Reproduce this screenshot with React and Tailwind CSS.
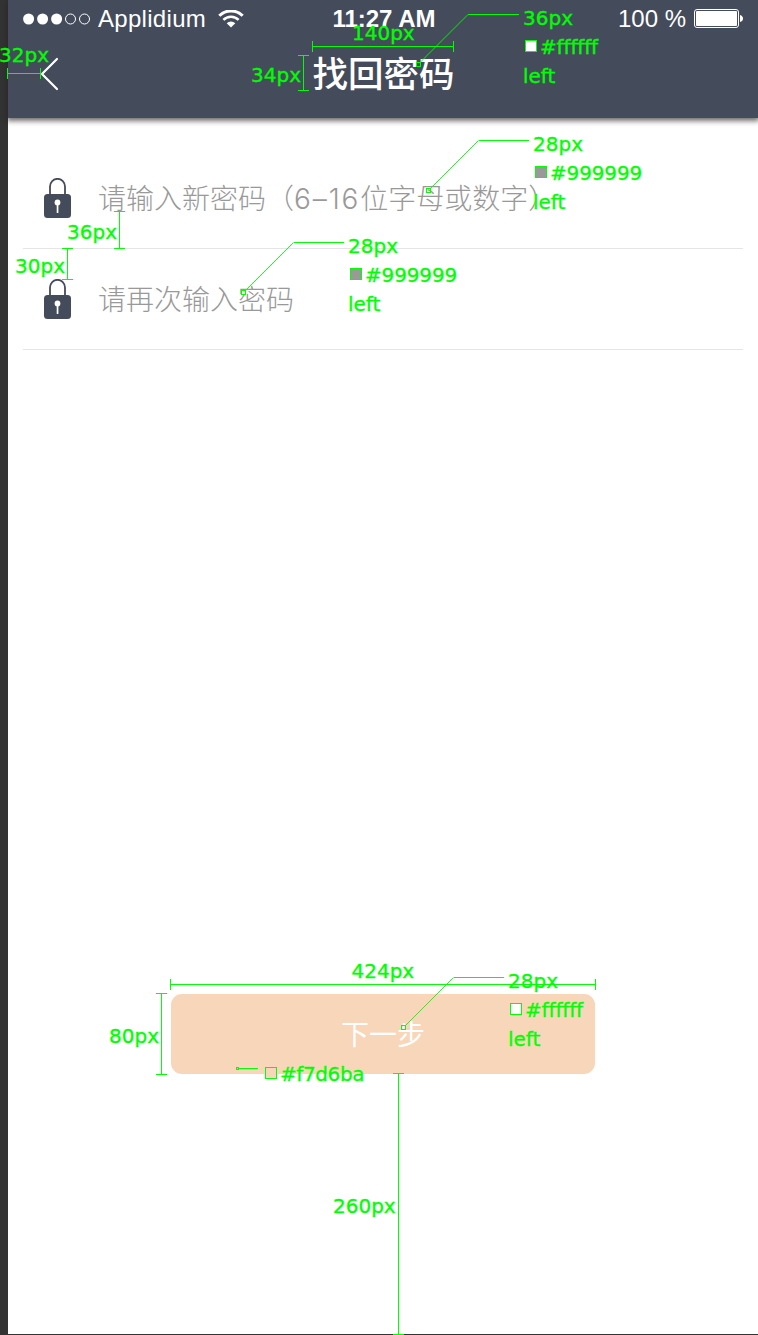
import React from 'react';

function SignalDots() {
  return (
    <svg className="block h-[12px] w-[69px]" viewBox="0 0 69 12">
      <g fill="#fff">
        <circle cx="5.6" cy="6" r="5.5" />
        <circle cx="19.6" cy="6" r="5.5" />
        <circle cx="33.6" cy="6" r="5.5" />
      </g>
      <g fill="none" stroke="#fff" strokeWidth="1">
        <circle cx="47.5" cy="6" r="5" />
        <circle cx="61.5" cy="6" r="5" />
      </g>
    </svg>
  );
}

function WifiIcon() {
  return (
    <svg className="block h-[18px] w-[26px]" viewBox="0 0 26 18" fill="none" stroke="#fff">
      <path d="M1.3 5.8 A16.5 16.5 0 0 1 24.7 5.8" strokeWidth="3" />
      <path d="M5.4 9.9 A10.8 10.8 0 0 1 20.6 9.9" strokeWidth="2.6" />
      <path d="M13 17.6 L8.7 13.3 A6.1 6.1 0 0 1 17.3 13.3 Z" fill="#fff" stroke="none" />
    </svg>
  );
}

function BatteryIcon() {
  return (
    <svg className="block h-[19px] w-[50px]" viewBox="0 0 50 19">
      <rect x="0.5" y="0.5" width="44" height="18" rx="2.5" fill="none" stroke="#fff" />
      <rect x="2" y="2" width="41" height="15" rx="1" fill="#fff" />
      <path d="M46 6 Q49 7 49 9.5 Q49 12 46 13 Z" fill="#fff" />
    </svg>
  );
}

function LockIcon() {
  return (
    <svg className="block h-[40px] w-[27px] shrink-0" viewBox="0 0 27 40">
      <path d="M6 17 V8.5 A7.5 7.7 0 0 1 21 8.5 V17" fill="none" stroke="#444b5b" strokeWidth="1.8" />
      <rect x="0" y="16" width="27" height="24" rx="3.5" fill="#444b5b" />
      <circle cx="13.5" cy="24.5" r="2.9" fill="#fff" />
      <rect x="12.7" y="25" width="1.7" height="10" rx="0.6" fill="#fff" />
    </svg>
  );
}

function Field({ children }) {
  return (
    <div className="ml-[15px] mr-[15px] flex h-[101px] items-start border-b border-[#e5e5e5] pl-[21px] pt-[30px]">
      <LockIcon />
      <div className="ml-[27px] whitespace-nowrap text-[28px] font-light leading-[38px] text-[#999999]">
        {children}
      </div>
    </div>
  );
}

function Spec({ className, swatch, size, color }) {
  return (
    <div className={'absolute whitespace-pre ' + className}>
      <div>{size}</div>
      <div className="flex items-start gap-[3px]">
        <span className={'ml-[2px] mt-[7px] block size-[12px] border border-[#00ff00] ' + swatch} />
        <span className="tracking-[-0.15px]">{color}</span>
      </div>
      <div>left</div>
    </div>
  );
}

function Annotations() {
  return (
    <div className="pointer-events-none absolute inset-0 overflow-hidden font-['DejaVu_Sans'] text-[20px] leading-[29px] text-[#00ff00] [-webkit-text-stroke:0.35px_#00ff00]">
      <svg className="absolute left-0 top-0 h-[1335px] w-[758px]" viewBox="0 0 758 1335" fill="none" stroke="#00ff00" strokeWidth="1">
        <g shapeRendering="crispEdges">
          <path d="M7.5 68V79M7 73.5H41M40.5 68V79" />
          <path d="M312.5 41V52M312 46.5H454M453.5 41V52" />
          <path d="M298 55.5H309M303.5 55V91M298 90.5H309" />
          <path d="M114 211.5H125M119.5 211V249M114 248.5H125" />
          <path d="M62 248.5H73M67.5 248V280M62 279.5H73" />
          <path d="M170.5 979V990M170 984.5H596M595.5 979V990" />
          <path d="M156 993.5H167M161.5 993V1075M156 1074.5H167" />
          <path d="M393 1073.5H404M398.5 1073V1335M393 1334.5H404" />
          <path d="M468 14.5H519M479 140.5H529M294 242.5H344M454 977.5H504M239 1068.5H258" />
          <path d="M416.5 62.5H420.5V66.5H416.5ZM426.5 188.5H430.5V192.5H426.5ZM241.5 290.5H245.5V294.5H241.5ZM401.5 1025.5H405.5V1029.5H401.5ZM236.5 1067.5H238.5V1069.5H236.5Z" />
        </g>
        <path d="M420 62.5L468 14.5M430.5 188.5L478.5 140.5M245.5 290.5L293.5 242.5M405.5 1025.5L453.5 977.5" strokeWidth="0.9" />
      </svg>
      <Spec className="left-[523px] top-[4px]" swatch="bg-white" size="36px" color="#ffffff" />
      <Spec className="left-[533px] top-[130px]" swatch="bg-[#999999]" size="28px" color="#999999" />
      <Spec className="left-[348px] top-[232px]" swatch="bg-[#999999]" size="28px" color="#999999" />
      <Spec className="left-[508px] top-[967px]" swatch="bg-white" size="28px" color="#ffffff" />
      <span className="absolute left-[-1px] top-[41px]">32px</span>
      <span className="absolute left-[352px] top-[19px]">140px</span>
      <span className="absolute left-[251px] top-[61px]">34px</span>
      <span className="absolute left-[67px] top-[218px]">36px</span>
      <span className="absolute left-[15px] top-[252px]">30px</span>
      <span className="absolute left-[351.5px] top-[957px]">424px</span>
      <span className="absolute left-[109px] top-[1022px]">80px</span>
      <span className="absolute left-[265px] top-[1067px] block size-[12px] border border-[#00ff00] bg-[#f7d6ba]" />
      <span className="absolute left-[280px] top-[1060px] tracking-[-0.4px]">#f7d6ba</span>
      <span className="absolute left-[333px] top-[1192px]">260px</span>
    </div>
  );
}

export default function App() {
  return (
    <div className="relative h-[1335px] w-[758px] overflow-hidden bg-[#333333] pb-px pl-[8px] font-['Noto_Sans_CJK_SC',sans-serif]">
      <main className="flex h-full flex-col bg-white">
        <header className="h-[118px] shrink-0 bg-[#444b5b] text-white shadow-[0_2px_5px_1px_rgba(40,30,30,0.65)]">
          <div className="grid h-[37px] grid-cols-[1fr_auto_1fr] items-center pl-[15px] pr-[14px] font-['Liberation_Sans'] text-[24px] leading-[37px]">
            <div className="flex items-center">
              <SignalDots />
              <span className="ml-[6px] tracking-[0.3px]">Applidium</span>
              <span className="ml-[12px]"><WifiIcon /></span>
            </div>
            <span className="pl-px font-bold">11:27 AM</span>
            <div className="flex items-center justify-end gap-[8px]">
              <span>100 %</span>
              <BatteryIcon />
            </div>
          </div>
          <div className="grid h-[74px] grid-cols-[1fr_auto_1fr] items-center pl-[32px] pr-[32px]">
            <svg className="block h-[34px] w-[20px]" viewBox="0 0 20 34" fill="none" stroke="#fff" strokeWidth="2.2" strokeLinecap="round">
              <path d="M17 2L2 17L17 32" />
            </svg>
            <h1 className="whitespace-nowrap pb-[5px] pl-px text-[35.5px] font-medium leading-[50px]">找回密码</h1>
          </div>
        </header>
        <section className="pt-[30px]">
          <Field>
            请输入新密码（<span className="font-['Inter'] tracking-[1.9px]">6–16</span>位字母或数字）
          </Field>
          <Field>请再次输入密码</Field>
        </section>
        <button className="mb-[260px] ml-[163px] mt-auto h-[80px] w-[424px] shrink-0 rounded-[11px] bg-[#f7d6ba] pb-[2px] text-[28px] font-normal text-white">
          下一步
        </button>
      </main>
      <Annotations />
    </div>
  );
}
